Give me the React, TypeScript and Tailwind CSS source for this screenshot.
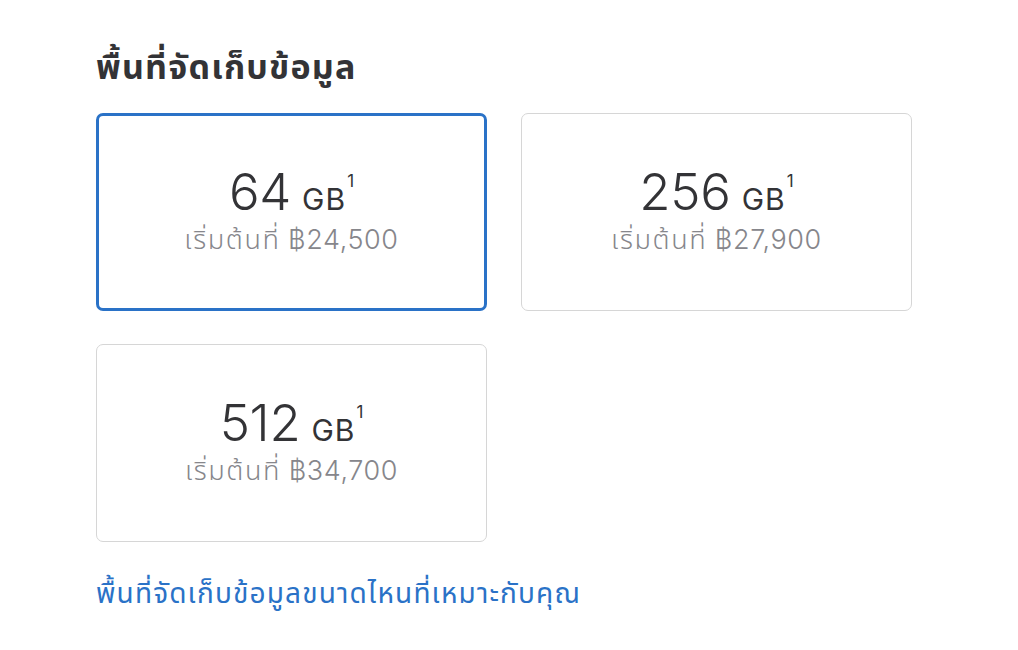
import { useState } from "react";

const options = [
  { size: "64", price: "฿24,500" },
  { size: "256", price: "฿27,900" },
  { size: "512", price: "฿34,700" },
];

export default function App() {
  const [selected, setSelected] = useState("64");

  return (
    <div
      className="min-h-[650px] w-[1018px] bg-white pl-[96px] pt-[44px] text-[#333336]"
      style={{ fontFamily: "Inter, 'Noto Sans', 'Noto Sans Thai', sans-serif" }}
    >
      <h2 className="text-[34px] font-bold leading-[46px] tracking-[1.2px]">
        พื้นที่จัดเก็บข้อมูล
      </h2>

      {/* Storage options */}
      <div className="mt-[23px] grid w-[816px] grid-cols-2 gap-x-[34px] gap-y-[33px]">
        {options.map((o) => (
          <button
            key={o.size}
            onClick={() => setSelected(o.size)}
            className={`flex h-[198px] flex-col items-center justify-center rounded-[7px] bg-white pb-[3px] ${
              selected === o.size
                ? "border-[3px] border-[#2a72c7]"
                : "border border-[#d6d6d6]"
            }`}
          >
            <div className="mb-[3px] flex items-baseline">
              <span className="text-[51px] font-light leading-[56px] tracking-[-0.3px]">
                {o.size}
              </span>
              <span className="ml-[11px] text-[30px] font-normal leading-[34px] tracking-[1px]">
                GB
              </span>
              <span className="ml-[1px] self-start pt-[8px] text-[17px] leading-[18px]">
                1
              </span>
            </div>
            <div className="text-[27px] font-light leading-[34px] text-[#86868b]">
              <span className="tracking-[1.6px]">เริ่มต้นที่</span>{" "}
              <span className="tracking-[0.6px]">{o.price}</span>
            </div>
          </button>
        ))}
      </div>

      <a
        href="#"
        className="mt-[32px] inline-block text-[28px] leading-[38px] tracking-[1.15px] text-[#2a72c7]"
      >
        พื้นที่จัดเก็บข้อมูลขนาดไหนที่เหมาะกับคุณ
      </a>
    </div>
  );
}
